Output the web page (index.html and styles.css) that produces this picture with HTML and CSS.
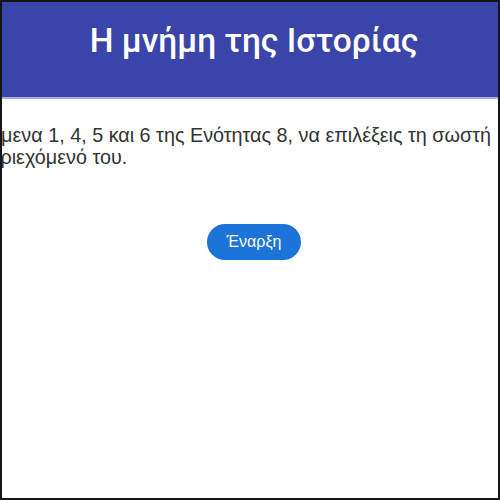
FILE: index.html
```html
<!DOCTYPE html>
<html lang="el">
<head>
<meta charset="utf-8">
<title>Η μνήμη της Ιστορίας</title>
<link rel="stylesheet" href="styles.css">
</head>
<body>
<div class="frame">
  <header class="header">
    <h1 class="title">Η μνήμη της Ιστορίας</h1>
  </header>
  <main class="content">
    <p class="intro"><span class="line">κείμενα 1, 4, 5 και 6 της Ενότητας 8, να επιλέξεις τη σωστή</span><span class="line">περιεχόμενό του.</span></p>
    <div class="actions">
      <button class="start" type="button">Έναρξη</button>
    </div>
  </main>
</div>
</body>
</html>
```
FILE: styles.css
```css
html, body {
  margin: 0;
  padding: 0;
  background: #ffffff;
}
.frame {
  width: 500px;
  height: 500px;
  box-sizing: border-box;
  border: 2px solid #161616;
  overflow: hidden;
  display: flex;
  flex-direction: column;
}
.header {
  background: #3a44a9;
  height: 95px;
  border-bottom: 2px solid #a7aee0;
  padding-left: 8px;
  display: flex;
  justify-content: center;
  flex-shrink: 0;
}
.title {
  margin: 0;
  padding-top: 16px;
  color: #ffffff;
  font-family: Roboto, "Noto Sans", sans-serif;
  font-weight: 500;
  font-size: 33.5px;
  line-height: 46px;
}
.content {
  flex: 1;
  display: flex;
  flex-direction: column;
}
.intro {
  margin: 25px 0 0 -24px;
  font-family: "Liberation Sans", Arial, sans-serif;
  font-size: 19.8px;
  line-height: 22px;
  color: #333333;
  white-space: nowrap;
}
.line {
  display: block;
}
.actions {
  display: flex;
  justify-content: center;
  padding-left: 8px;
  margin-top: 56px;
}
.start {
  width: 94px;
  height: 36px;
  border: none;
  border-radius: 18px;
  background: #1c74d9;
  color: #ffffff;
  font-family: "Liberation Sans", Arial, sans-serif;
  font-size: 16px;
  padding: 0;
  cursor: pointer;
}
```
